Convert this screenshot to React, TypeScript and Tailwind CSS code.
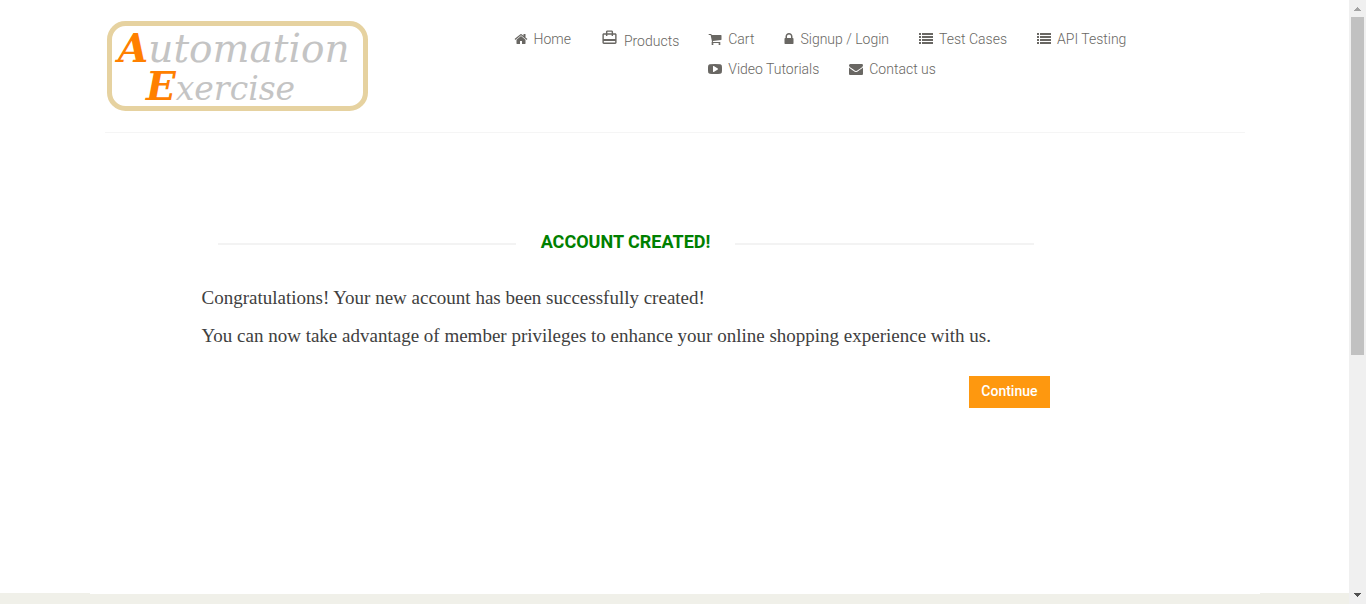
import type { ReactNode } from 'react';
import { MdOutlineCardTravel } from 'react-icons/md';

const PATHS = {
  home: 'M1472 992v480q0 26-19 45t-45 19h-384v-384h-256v384h-384q-26 0-45-19t-19-45v-480q0-1 .5-3t.5-3l575-474 575 474q1 2 1 6zm223-69l-62 74q-8 9-21 11h-3q-13 0-21-7l-692-577-692 577q-12 8-24 7-13-2-21-11l-62-74q-8-10-7-23.5t11-21.5l719-599q32-26 76-26t76 26l244 204v-195q0-14 9-23t23-9h192q14 0 23 9t9 23v408l219 182q10 8 11 21.5t-7 23.5z',
  cart: 'M704 1536q0 52-38 90t-90 38-90-38-38-90 38-90 90-38 90 38 38 90zm896 0q0 52-38 90t-90 38-90-38-38-90 38-90 90-38 90 38 38 90zm128-1088v512q0 24-16.5 42.5t-40.5 21.5l-1044 122q13 60 13 70 0 16-24 64h920q26 0 45 19t19 45-19 45-45 19h-1024q-26 0-45-19t-19-45q0-11 8-31.5t16-36 21.5-40 15.5-29.5l-177-823h-204q-26 0-45-19t-19-45 19-45 45-19h256q16 0 28.5 6.5t19.5 15.5 13 24.5 8 26 5.5 29.5 4.5 26h1201q26 0 45 19t19 45z',
  lock: 'M640 768h512v-192q0-106-75-181t-181-75-181 75-75 181v192zm832 96v576q0 40-28 68t-68 28h-960q-40 0-68-28t-28-68v-576q0-40 28-68t68-28h32v-192q0-184 132-316t316-132 316 132 132 316v192h32q40 0 68 28t28 68z',
  list: 'M0 128h256v256H0zM384 128h1408v256H384zM0 512h256v256H0zM384 512h1408v256H384zM0 896h256v256H0zM384 896h1408v256H384zM0 1280h256v256H0zM384 1280h1408v256H384z',
  video: 'M1280 896q0-37-30-54l-512-320q-31-20-65-2-33 18-33 56v640q0 38 33 56 16 8 31 8 20 0 34-10l512-320q30-17 30-54zm512 0q0 96-1 150t-8.5 136.5-22.5 147.5q-16 73-69 123t-124 58q-222 25-671 25t-671-25q-71-8-124.5-58t-69.5-123q-14-65-21.5-147.5t-8.5-136.5-1-150 1-150 8.5-136.5 22.5-147.5q16-73 69-123t124-58q222-25 671-25t671 25q71 8 124.5 58t69.5 123q14 65 21.5 147.5t8.5 136.5 1 150z',
  envelope: 'M1792 710v794q0 66-47 113t-113 47h-1472q-66 0-113-47t-47-113v-794q44 49 101 87 362 246 497 345 57 42 92.5 65.5t94.5 48 110 24.5h2q51 0 110-24.5t94.5-48 92.5-65.5q170-123 498-345 57-39 100-87zm0-294q0 79-49 151t-122 123q-376 261-468 325-10 7-42.5 31t-54 38.5-52 32.5-57.5 27-50 9h-2q-23 0-50-9t-57.5-27-52-32.5-54-38.5-42.5-31q-91-64-262-182.5t-205-142.5q-62-42-117-115.5t-55-136.5q0-78 41.5-130t118.5-52h1472q65 0 112.5 47t47.5 113z',
};

function Icon({ name, narrow = false }: { name: keyof typeof PATHS; narrow?: boolean }) {
  return (
    <svg
      aria-hidden="true"
      viewBox={narrow ? '256 0 1280 1792' : '0 0 1792 1792'}
      className={narrow ? 'h-3.5 w-2.5 shrink-0' : 'size-3.5 shrink-0'}
      fill="currentColor"
    >
      <path d={PATHS[name]} />
    </svg>
  );
}

function NavItem({ icon, children }: { icon: ReactNode; children: ReactNode }) {
  return (
    <li>
      <a href="#" className="flex items-center gap-1.5 whitespace-nowrap">
        {icon}
        {children}
      </a>
    </li>
  );
}

function Logo() {
  return (
    <a href="#" aria-label="Automation Exercise" className="mt-[21px] ml-0.5 block shrink-0">
      <svg
        width="262"
        height="90"
        viewBox="0 0 262 90"
        className="overflow-visible font-['DejaVu_Serif',serif] italic"
      >
        <rect x="2.5" y="2.5" width="256" height="85" rx="16" fill="#fff" stroke="#e6d2a0" strokeWidth="5" />
        <text x="11" y="41" fontSize="39" fill="#c4c4c4">
          <tspan fill="#ff8000" fontWeight="700">A</tspan>utomation
        </text>
        <text x="39" y="79" fontSize="33" fill="#c4c4c4">
          <tspan fill="#ff8000" fontSize="39" fontWeight="700">E</tspan>xercise
        </text>
      </svg>
    </a>
  );
}

function Header() {
  return (
    <header className="mx-auto flex w-full max-w-[1140px] items-start border-b border-[#f5f5f5] pb-[21px]">
      <Logo />
      <nav className="mt-[29px] ml-[145px] flex min-w-0 flex-1 gap-[29px] text-sm leading-5 font-light text-[#696763]">
        <ul className="flex items-start gap-[30px]">
          <NavItem icon={<Icon name="home" />}>Home</NavItem>
          <li>
            <a href="#" className="flex items-start gap-1.5">
              <MdOutlineCardTravel aria-hidden="true" className="size-[17px] shrink-0" />
              <span className="pt-0.5">Products</span>
            </a>
          </li>
        </ul>
        <ul className="flex min-w-0 flex-1 flex-wrap gap-x-[30px] gap-y-2.5">
          <NavItem icon={<Icon name="cart" />}>Cart</NavItem>
          <NavItem icon={<Icon name="lock" narrow />}>Signup / Login</NavItem>
          <NavItem icon={<Icon name="list" />}>Test Cases</NavItem>
          <NavItem icon={<Icon name="list" />}>API Testing</NavItem>
          <NavItem icon={<Icon name="video" />}>Video Tutorials</NavItem>
          <NavItem icon={<Icon name="envelope" />}>Contact us</NavItem>
        </ul>
      </nav>
    </header>
  );
}

function Scrollbar() {
  return (
    <div aria-hidden="true" className="flex w-[17px] shrink-0 flex-col items-center bg-[#f0f0f0]">
      <svg width="17" height="17" className="shrink-0" fill="#a3a3a3" shapeRendering="crispEdges">
        <path d="M8 7h1v1h1v1h1v1h1v1H5v-1h1V9h1V8h1z" />
      </svg>
      <div className="w-full flex-1 px-0.5">
        <div className="h-[59.3%] bg-[#c1c1c1]" />
      </div>
      <svg width="17" height="17" className="shrink-0" fill="#505050" shapeRendering="crispEdges">
        <path d="M5 6h7v1h-1v1h-1v1H9v1H8V9H7V8H6V7H5z" />
      </svg>
    </div>
  );
}

export default function App() {
  return (
    <div className="flex h-screen overflow-hidden bg-white font-['Roboto',sans-serif]">
      <div className="flex min-w-0 flex-1 flex-col">
        <Header />
        <main className="mx-auto w-full max-w-[1140px] flex-1 pt-[97px]">
          <section className="ml-[97px] max-w-[848px]">
            <h2 className="flex items-center gap-[25px] px-4 text-lg leading-6 font-bold text-[#008000]">
              <span className="mt-1 h-0.5 flex-1 bg-[#f3f3f3]" />
              ACCOUNT CREATED!
              <span className="mt-1 h-0.5 flex-1 bg-[#f3f3f3]" />
            </h2>
            <div className="mt-[30px] space-y-2.5 font-['Liberation_Serif',serif] text-[19px] leading-7 text-[#404040]">
              <p>Congratulations! Your new account has been successfully created!</p>
              <p>You can now take advantage of member privileges to enhance your online shopping experience with us.</p>
            </div>
            <div className="mt-[26px] flex justify-end">
              <a href="#" className="bg-[#fe980f] px-3 pt-[5px] pb-[7px] text-sm leading-5 font-medium text-white">
                Continue
              </a>
            </div>
          </section>
        </main>
        <footer className="h-[11px] bg-[#f0f0e9]">
          <div className="mx-auto h-px max-w-[1170px] bg-white" />
        </footer>
      </div>
      <Scrollbar />
    </div>
  );
}
